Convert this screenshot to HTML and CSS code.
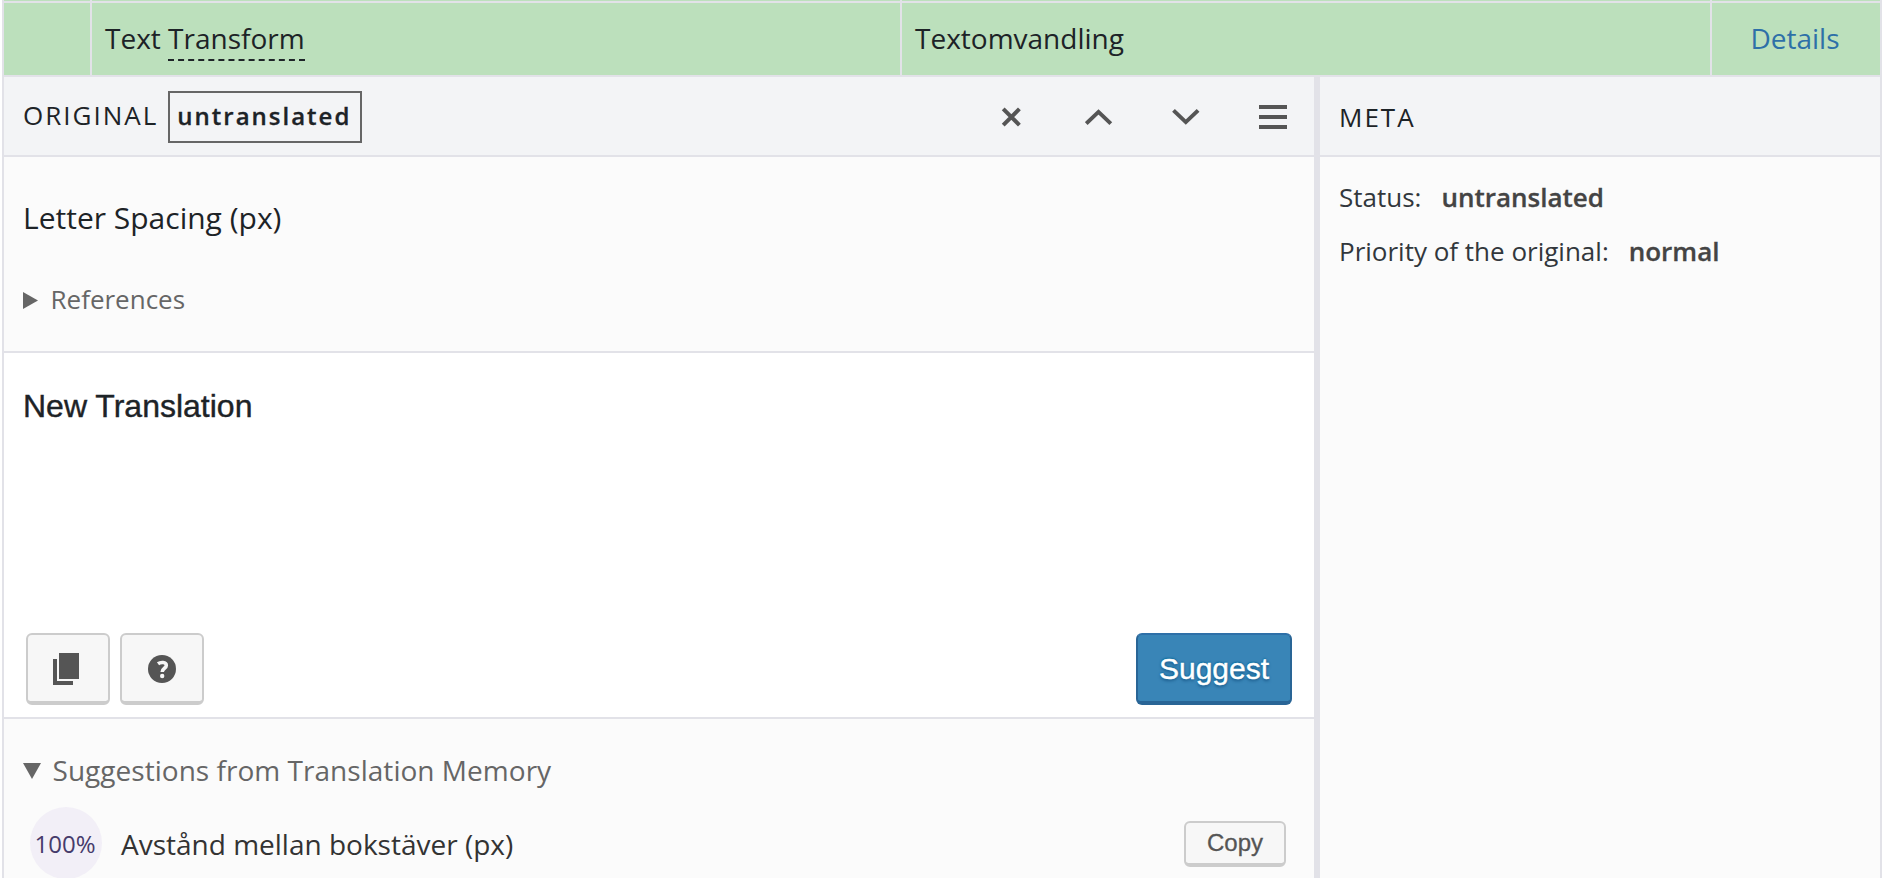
FILE: index.html
```html
<!DOCTYPE html>
<html lang="en">
<head>
<meta charset="utf-8">
<title>Translations</title>
<link rel="stylesheet" href="styles.css">
</head>
<body>
<div class="table">
  <div class="sliver"><span></span><span></span><span></span><span></span></div>
  <div class="row">
    <div class="cell"></div>
    <div class="cell"><span class="source">Text <span class="term">Transform</span></span></div>
    <div class="cell"><span class="target">Textomvandling</span></div>
    <div class="cell cell-action"><a class="details">Details</a></div>
  </div>
  <div class="editor">
    <main class="panel">
      <header class="head">
        <span class="head-title">ORIGINAL</span>
        <span class="badge"><span class="badge-text">untranslated</span></span>
        <nav class="tools">
          <svg width="28" height="28" viewBox="0 0 28 28"><path d="M5.2 5.9L21.4 22.1M21.4 5.9L5.2 22.1"/></svg>
          <svg width="28" height="28" viewBox="0 0 28 28"><path d="M1.2 20.6L13.5 8.9L25.8 20.6"/></svg>
          <svg width="28" height="28" viewBox="0 0 28 28"><path d="M1.5 7.4L13.8 19.1L26.1 7.4"/></svg>
          <svg width="28" height="28" viewBox="0 0 28 28"><path d="M0 4H28M0 14H28M0 24H28"/></svg>
        </nav>
      </header>
      <section class="original">
        <p class="string">Letter Spacing (px)</p>
        <div class="refs"><svg width="15" height="17" viewBox="0 0 15 17"><path d="M0 0L15 8.5L0 17Z"/></svg><span class="refs-label">References</span></div>
      </section>
      <section class="translation">
        <div class="textarea">New Translation</div>
        <div class="actions">
          <button class="btn"><svg width="26" height="32" viewBox="0 0 26 32"><path d="M6 0H26V26H6ZM0 6H4V28H20V32H0Z"/></svg></button>
          <button class="btn btn-help"><svg width="28" height="28" viewBox="0 0 28 28"><circle cx="14" cy="14" r="14"/><path class="hook" d="M10 8.8C12.4 7 18.3 6.6 18.3 10.4C18.3 13.4 14.2 13.2 14.2 17"/><circle class="dot" cx="14.2" cy="21" r="2.2"/></svg></button>
          <button class="btn btn-primary">Suggest</button>
        </div>
      </section>
      <section class="memory">
        <div class="memory-head"><svg width="18" height="16" viewBox="0 0 18 16"><path d="M0 0H18L9 16Z"/></svg><span class="memory-label">Suggestions from Translation Memory</span></div>
        <div class="match">
          <span class="score">100%</span>
          <span class="match-text">Avstånd mellan bokstäver (px)</span>
          <button class="btn btn-copy">Copy</button>
        </div>
      </section>
    </main>
    <aside class="meta">
      <header class="head"><span class="meta-title">META</span></header>
      <dl class="facts">
        <div class="fact"><dt>Status:</dt><dd class="status">untranslated</dd></div>
        <div class="fact"><dt>Priority of the original:</dt><dd class="priority">normal</dd></div>
      </dl>
    </aside>
  </div>
</div>
</body>
</html>
```
FILE: styles.css
```css
* { box-sizing: border-box; }
body {
  margin: 0;
  height: 878px;
  overflow: hidden;
  background: #fff;
  color: #1d2327;
  font-family: "Open Sans", "Noto Sans", sans-serif;
}
span, dt, dd, a, button { white-space: nowrap; }
p, dl, dd { margin: 0; }
.table {
  height: 878px;
  margin: 0 2px;
  border: solid #e2e2e8;
  border-width: 0 2px;
  display: flex;
  flex-direction: column;
  overflow: hidden;
}
.sliver, .row {
  display: grid;
  grid-template-columns: 86px 808px 808px 1fr;
  column-gap: 2px;
  background: #e2e2e8;
  flex: none;
}
.sliver { height: 3px; padding-bottom: 2px; }
.sliver span, .cell { background: #bce0bc; }
.row { height: 74px; padding-bottom: 2px; }
.cell { padding: 15px 0 0 13px; font-size: 28px; line-height: 40px; }
.cell-action { padding-left: 0; text-align: center; padding-right: 2px; }
.source, .target, .details { display: inline-block; }
.details { color: #2e70a8; }
.term { border-bottom: 2px dashed #1d2327; padding-bottom: 2px; }

.editor { flex: 1; display: flex; min-height: 0; }
.panel { width: 1310px; flex: none; display: flex; flex-direction: column; }
.meta { flex: 1; border-left: 6px solid #e2e2e8; background: #fbfbfb; }
.head {
  flex: none;
  height: 80px;
  display: flex;
  align-items: center;
  border-bottom: 2px solid #e2e2e8;
  background: #f3f4f6;
}
.panel .head { padding: 0 27px 0 19px; }
.head-title { font-size: 26px; line-height: 36px; letter-spacing: 2px; margin-top: -3px; }
.badge {
  margin: 2px 0 0 10px;
  width: 194px;
  height: 52px;
  padding: 5px 0 0 7px;
  border: 2px solid #666;
  font-size: 24px;
  font-weight: 600;
  line-height: 36px;
  letter-spacing: 2px;
  -webkit-text-stroke: .3px;
}
.tools { margin-left: auto; display: flex; gap: 59px; padding-top: 2px; }
.tools svg { display: block; fill: none; stroke: #555; stroke-width: 4; }

.original { flex: none; height: 196px; padding: 39px 0 0 19px; background: #fbfbfb; border-bottom: 2px solid #e2e2e8; }
.string { font-size: 30px; line-height: 44px; display: flex; }
.refs { display: flex; align-items: center; margin-top: 40px; color: #666; font-size: 26px; line-height: 38px; }
.refs svg, .memory-head svg { fill: #666; flex: none; }
.refs svg { margin-top: 3px; }
.refs-label { margin-left: 12.5px; }

.translation { flex: none; height: 366px; padding: 31px 22px 0; border-bottom: 2px solid #e2e2e8; background: #fff; }
.textarea { height: 249px; margin-left: -3px; font: 32px/44px "Liberation Sans", Arial, sans-serif; -webkit-text-stroke: .4px; display: flex; }
.actions { display: flex; gap: 10px; }
.btn {
  width: 84px;
  height: 72px;
  padding: 0;
  border: 2px solid #ccc;
  border-bottom-width: 4px;
  border-radius: 6px;
  background: #f7f7f7;
  color: #555;
  font-family: "Liberation Sans", Arial, sans-serif;
  display: flex;
  align-items: center;
  justify-content: center;
}
.btn svg { fill: #555; margin-right: 4px; margin-top: 2px; }
.btn-help svg { margin-right: 0; }
.btn .hook { fill: none; stroke: #f7f7f7; stroke-width: 3.6; }
.btn .dot { fill: #f7f7f7; }
.btn-primary {
  width: 156px;
  margin-left: auto;
  padding-top: 2px;
  background: #3985b7;
  border-color: #2e70a8 #296596 #296596;
  color: #fff;
  font-size: 30px;
  -webkit-text-stroke: .4px;
  text-shadow: 0 -1px 2px #006799, 0 2px 3px #1c5c8c;
}
.memory { flex: 1; padding: 31px 28px 0 19px; background: #fbfbfb; }
.memory-head { display: flex; align-items: center; color: #666; font-size: 28px; line-height: 40px; }
.memory-head svg { margin-top: 2px; }
.memory-label { margin-left: 11.5px; letter-spacing: .03px; }
.match { display: flex; align-items: center; height: 72px; margin-top: 17px; padding-left: 7px; }
.score {
  width: 72px;
  height: 72px;
  flex: none;
  border-radius: 50%;
  background: #f2eff7;
  color: #463b6b;
  font-size: 24px;
  line-height: 74px;
  text-align: center;
  padding-right: 2px;
}
.match-text { margin-left: 19px; font-size: 28px; line-height: 40px; color: #333; padding-top: 2px; }
.btn-copy { width: 102px; height: 46px; margin: 2px 0 0 auto; font-size: 24px; -webkit-text-stroke: .3px; }

.meta-title { margin-left: 19px; padding-top: 2px; font-size: 26px; line-height: 36px; letter-spacing: 2px; }
.facts { padding: 21px 0 0 19px; }
.fact { display: flex; height: 54px; font-size: 26px; line-height: 38px; color: #32373c; }
.fact dd { margin-left: 20px; font-weight: 600; color: #444; -webkit-text-stroke: .3px; }
```
